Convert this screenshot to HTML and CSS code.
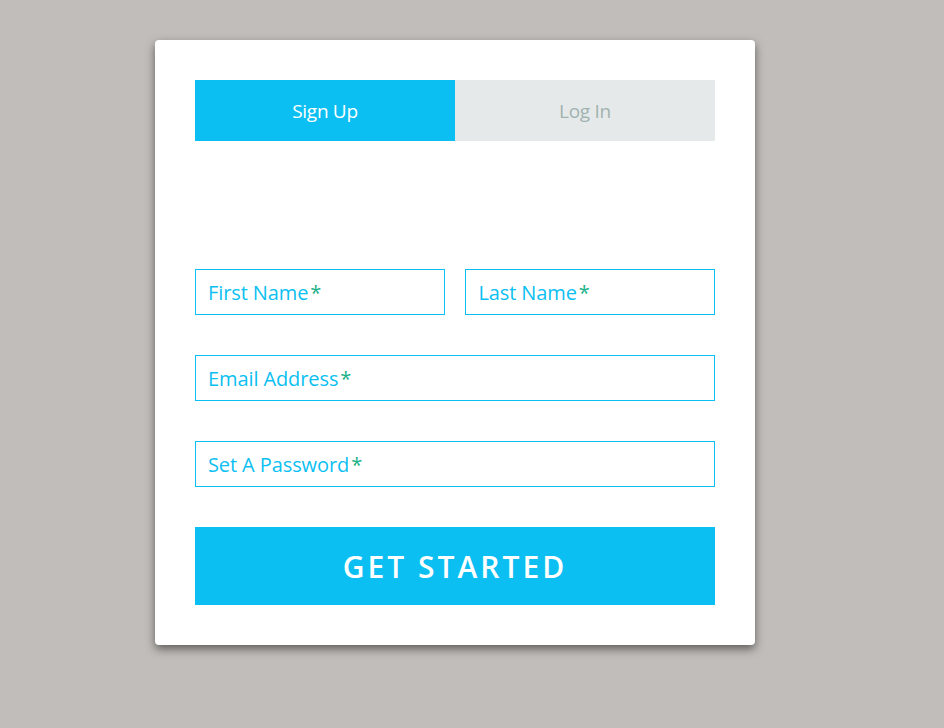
FILE: index.html
```html
<!DOCTYPE html>
<html lang="en">
<head>
<meta charset="utf-8">
<title>Sign Up</title>
<link rel="stylesheet" href="styles.css">
</head>
<body>
<div class="page">
  <div class="card">
    <div class="tabs">
      <div class="tab active">Sign Up</div>
      <div class="tab">Log In</div>
    </div>
    <form class="form">
      <div class="row two">
        <label class="field"><span class="label">First Name<span class="req">*</span></span></label>
        <label class="field"><span class="label">Last Name<span class="req">*</span></span></label>
      </div>
      <div class="row">
        <label class="field"><span class="label">Email Address<span class="req">*</span></span></label>
      </div>
      <div class="row">
        <label class="field"><span class="label">Set A Password<span class="req">*</span></span></label>
      </div>
      <button type="button" class="submit">GET STARTED</button>
    </form>
  </div>
</div>
</body>
</html>
```
FILE: styles.css
```css
html, body {
  margin: 0;
  padding: 0;
  background: #c0bdba;
  font-family: "Open Sans", "Liberation Sans", sans-serif;
}
.page {
  min-height: 728px;
  box-sizing: border-box;
  padding: 40px 0 40px 155px;
}
.card {
  width: 520px;
  padding: 40px;
  background: #ffffff;
  border-radius: 4px;
  box-shadow: 0 4px 10px rgba(0, 0, 0, 0.5);
}
.tabs {
  display: grid;
  grid-template-columns: 1fr 1fr;
  height: 61px;
}
.tab {
  display: flex;
  align-items: center;
  justify-content: center;
  background: #e6e9ea;
  color: #a0b3b0;
  font-size: 19px;
  letter-spacing: -0.3px;
}
.tab.active {
  background: #0bbff2;
  color: #ffffff;
}
.form {
  margin-top: 128px;
  display: flex;
  flex-direction: column;
  gap: 40px;
}
.row.two {
  display: grid;
  grid-template-columns: 48% 48%;
  justify-content: space-between;
}
.field {
  display: flex;
  align-items: center;
  height: 46px;
  box-sizing: border-box;
  border: 1px solid #0bbff2;
  padding: 0 12px;
}
.label {
  color: #0bbff2;
  font-size: 20px;
  letter-spacing: -0.1px;
}
.req {
  color: #1ab188;
  margin-left: 2px;
}
.submit {
  height: 78px;
  border: 0;
  background: #0bbff2;
  color: #ffffff;
  font-family: "Open Sans", "Liberation Sans", sans-serif;
  font-size: 30px;
  font-weight: 600;
  letter-spacing: 3px;
  padding: 0;
}
```
